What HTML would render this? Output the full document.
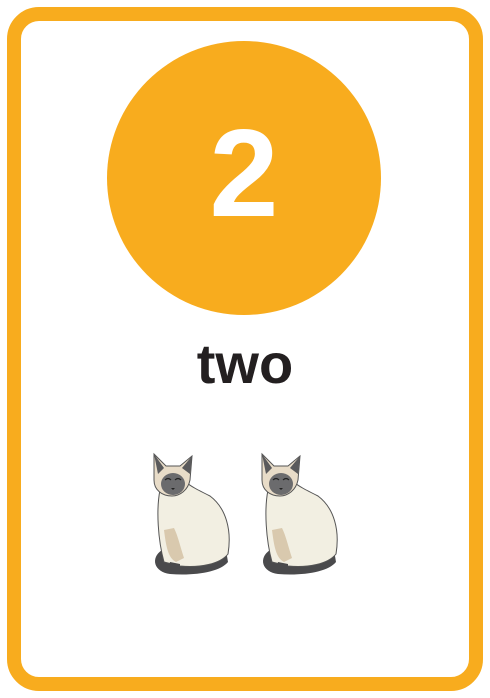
<!DOCTYPE html>
<html><head><style>
html,body{margin:0;padding:0;background:#fff;}
body{width:490px;height:698px;position:relative;overflow:hidden;font-family:"Liberation Sans",sans-serif;}
.card{position:absolute;left:7px;top:7px;width:448px;height:656px;border:14px solid #f8ac1e;border-radius:32px;}
.circle{position:absolute;left:107px;top:41px;width:274px;height:274px;border-radius:50%;background:#f8ac1e;}
.num{position:absolute;left:107px;width:274px;top:112px;text-align:center;color:#fff;font-weight:bold;font-size:124px;line-height:124px;}
.word{position:absolute;left:0;width:490px;top:334px;text-align:center;color:#231f20;font-weight:bold;font-size:56px;line-height:60px;}
svg{position:absolute;}
</style></head><body>
<div class="card"></div>
<div class="circle"></div>
<div class="num">2</div>
<div class="word">two</div>
<svg width="490" height="698" viewBox="0 0 490 698">
<defs>
<g id="cat">
<!-- tail -->
<path d="M12 100 C0 108 4 122 20 124 C45 126 70 122 78 112 L76 100 C66 112 40 116 22 112 C16 110 18 104 24 102 Z" fill="#4a4a4c"/>
<!-- body -->
<path d="M10 40 C6 60 8 90 14 112 L30 116 C50 118 70 114 78 104 C82 80 76 58 60 46 C48 40 40 36 36 32 Z" fill="#f2efe2" stroke="#555" stroke-width="1"/>
<path d="M14 80 C16 96 18 108 26 112 L34 108 C30 96 28 86 24 78 Z" fill="#d9c9ae"/>
<!-- head -->
<path d="M4 4 L16 16 L30 16 L42 6 L40 30 C38 40 30 46 22 46 C12 46 4 40 4 30 Z" fill="#e8dcc8" stroke="#555" stroke-width="1"/>
<path d="M4 4 L14 18 L8 24 Z M42 6 L32 18 L40 24 Z" fill="#5a5a5c"/>
<ellipse cx="23" cy="34" rx="12" ry="11" fill="#6b6b6d"/>
<path d="M15 30 q3 -3 6 0 M25 30 q3 -3 6 0" stroke="#222" stroke-width="1.2" fill="none"/>
<path d="M21 38 h4 l-2 2 z" fill="#222"/>
<path d="M20 112 C18 118 22 124 30 122 L30 114 Z" fill="#4a4a4c"/>
</g>
</defs>
<use href="#cat" x="150" y="450"/>
<use href="#cat" x="258" y="450"/>
</svg>
</body></html>
